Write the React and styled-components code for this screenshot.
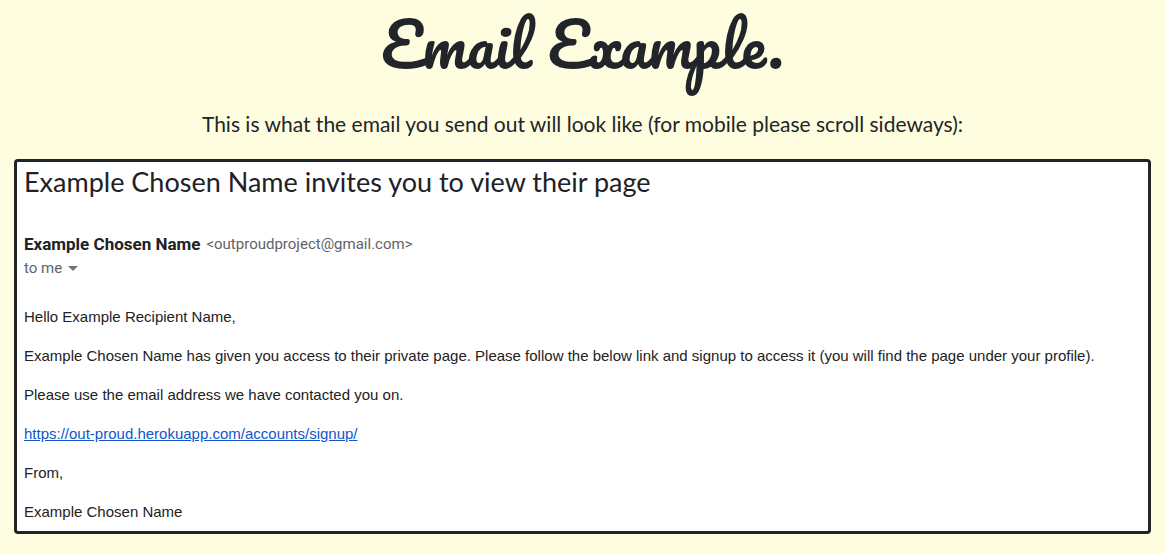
import React from "react";
import styled, { createGlobalStyle } from "styled-components";

const Global = createGlobalStyle`
  * { box-sizing: border-box; }
  body { margin: 0; background: #fffddf; color: #212529; }
`;
const Page = styled.main`
  display: flex;
  flex-direction: column;
  padding: 0 14px 20px;
`;
const Title = styled.h1`
  margin: 0 0 24px;
  text-align: center;
  font: 400 60px/88px "Pacifico", cursive;
`;
const Lead = styled.p`
  margin: 0 0 23px;
  text-align: center;
  font: 400 21px/24px "Lato", sans-serif;
`;
const Card = styled.article`
  border: 3px solid #212529;
  border-radius: 4px;
  background: #fff;
  padding: 4px 7px 10px;
  overflow-x: auto;
`;
const Subject = styled.h2`
  margin: 0 0 34px;
  color: #202124;
  font: 400 27px/32px "Lato", sans-serif;
`;
const Sender = styled.div`
  display: flex;
  align-items: center;
  gap: 6px;
  color: #5f6368;
  font: 400 15px/24px Roboto, sans-serif;
`;
const Name = styled.strong`
  color: #202124;
  font-size: 17px;
`;
const Body = styled.div`
  margin-top: 27px;
  color: #222;
  font: 400 15px/19px "Liberation Sans", Arial, sans-serif;
  white-space: nowrap;
  p { margin: 0 0 20px; }
  p:last-child { margin: 0; }
`;
const Link = styled.a`
  color: #1155cc;
`;

export default function App() {
  return (
    <Page>
      <Global />
      <Title>Email Example.</Title>
      <Lead>This is what the email you send out will look like (for mobile please scroll sideways):</Lead>
      <Card>
        <Subject>Example Chosen Name invites you to view their page</Subject>
        <Sender><Name>Example Chosen Name</Name><span>&lt;outproudproject@gmail.com&gt;</span></Sender>
        <Sender><span>to me</span><svg width="10" height="5" viewBox="0 0 10 5" aria-hidden="true"><path d="M0 0h10L5 5z" fill="#757575" /></svg></Sender>
        <Body>
          <p>Hello Example Recipient Name,</p>
          <p>Example Chosen Name has given you access to their private page. Please follow the below link and signup to access it (you will find the page under your profile).</p>
          <p>Please use the email address we have contacted you on.</p>
          <p><Link href="https://out-proud.herokuapp.com/accounts/signup/">https://out-proud.herokuapp.com/accounts/signup/</Link></p>
          <p>From,</p>
          <p>Example Chosen Name</p>
        </Body>
      </Card>
    </Page>
  );
}
